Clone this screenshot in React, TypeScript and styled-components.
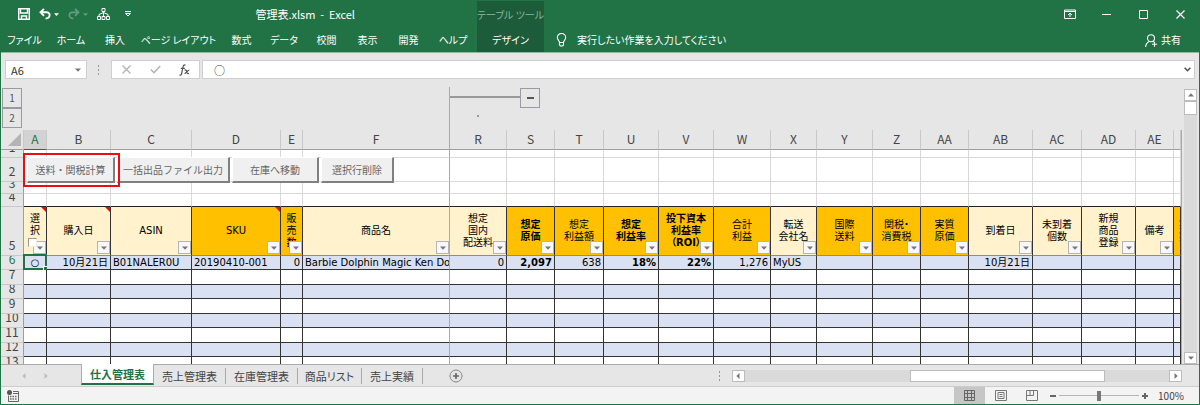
import React from 'react';
import styled, { createGlobalStyle, css } from 'styled-components';

const GREEN = '#217346';
const FONT = '"Noto Sans CJK JP", sans-serif';

const Global = createGlobalStyle`
  *, *::before, *::after { box-sizing: border-box; }
  body { margin: 0; font: 10px/12px ${FONT}; font-feature-settings: 'palt'; color: #444; }
  button, input { font: inherit; color: inherit; margin: 0; padding: 0; border: 0; background: none; border-radius: 0; outline: 0; font-feature-settings: inherit; }
  svg { display: block; flex: none; }
`;

const Window = styled.div`
  display: flex;
  flex-direction: column;
  height: 100vh;
  overflow: hidden;
  background: #e6e6e6;
  border: 1px solid ${GREEN};
  border-top: 0;
`;

/* ---------- title bar and ribbon ---------- */

const Header = styled.header`
  display: flex;
  flex: none;
  background: ${GREEN};
  color: #fff;
  border-bottom: 1px solid #90b9a2;
`;
const HeaderPane = styled.div<{ $grow?: boolean }>`
  flex: ${p => (p.$grow ? '1' : 'none')};
`;
const TitleRow = styled.div<{ $end?: boolean }>`
  display: flex;
  align-items: center;
  height: 28px;
  justify-content: ${p => (p.$end ? 'flex-end' : 'flex-start')};
`;
const QuickTools = styled.div`
  display: flex;
  align-items: center;
  gap: 9px;
  padding-left: 17px;
`;
const ToolButton = styled.button<{ $faded?: boolean }>`
  display: flex;
  align-items: center;
  gap: 3px;
  opacity: ${p => (p.$faded ? 0.3 : 1)};
`;
const DocTitle = styled.h1`
  margin: 0 122px 0 auto;
  font-size: 11px;
  line-height: 16px;
  font-weight: 400;
  white-space: pre;
`;
const TabRow = styled.nav`
  display: flex;
  align-items: center;
  height: 24px;
`;
const RibbonTab = styled.button<{ $width: number }>`
  width: ${p => p.$width}px;
  height: 24px;
  white-space: nowrap;
  text-align: center;
`;
const ContextGroup = styled.div`
  flex: none;
  width: 67px;
  margin-top: 1px;
  background: #1d5c3a;
  text-align: center;
`;
const ContextLabel = styled.div`
  height: 27px;
  line-height: 27px;
  color: #86b59b;
  white-space: nowrap;
`;
const WindowButton = styled.button`
  display: flex;
  align-items: center;
  justify-content: center;
  width: 37px;
  height: 26px;
`;
const TellMe = styled.button`
  display: flex;
  align-items: center;
  gap: 10px;
  padding-left: 12px;
  white-space: nowrap;
`;
const Share = styled.button`
  display: flex;
  align-items: center;
  gap: 3px;
  margin: 0 18px 0 auto;
`;

/* ---------- formula bar ---------- */

const FormulaBar = styled.div`
  display: flex;
  align-items: center;
  flex: none;
  height: 27px;
  padding: 7px 4px 1px;
`;
const Field = styled.div<{ $width?: number }>`
  display: flex;
  align-items: center;
  height: 19px;
  border: 1px solid #cfcfcf;
  background: #fff;
  ${p => (p.$width ? css`flex: none; width: ${p.$width}px;` : css`flex: 1; margin-left: 2px;`)}
`;
const FieldInput = styled.input<{ $indent: number }>`
  flex: 1;
  min-width: 0;
  height: 17px;
  padding-left: ${p => p.$indent}px;
  font-size: 11px;
  line-height: 16px;
  color: #333;
`;
const FieldButton = styled.button<{ $width: number }>`
  display: flex;
  align-items: center;
  justify-content: center;
  width: ${p => p.$width}px;
  height: 17px;
`;
const Grip = styled.div<{ $width: number }>`
  display: flex;
  flex: none;
  justify-content: center;
  width: ${p => p.$width}px;
`;

/* ---------- sheet ---------- */

const Workspace = styled.main`
  display: flex;
  flex: 1;
  min-height: 0;
`;
const SheetPane = styled.div`
  display: flex;
  flex-direction: column;
  flex: 1;
  min-width: 0;
`;
const Outline = styled.div`
  display: flex;
  flex: none;
  height: 50px;
  padding-top: 7px;
`;
const Levels = styled.div`
  display: flex;
  flex-direction: column;
  width: 448px;
  padding: 1px 0 0 1px;
`;
const OutlineButton = styled.button`
  display: flex;
  align-items: center;
  justify-content: center;
  flex: none;
  width: 20px;
  height: 20px;
  border: 1px solid #9a9aa2;
  color: #555;
`;
const GroupColumn = styled.div`
  display: flex;
  align-items: flex-start;
  padding-top: 1px;
  border-left: 1px solid #ababab;
`;
const GroupLine = styled.div`
  width: 70px;
  height: 10px;
  border-bottom: 2px solid #999;
`;
const GroupDot = styled.span`
  display: block;
  width: 2px;
  height: 2px;
  margin: 17px 0 0 27px;
  background: #999;
`;
const GridArea = styled.div`
  position: relative;
  flex: 1;
  min-height: 0;
  overflow: hidden;
  border-right: 1px solid #ababab;
`;
const Grid = styled.table`
  width: 100%;
  table-layout: fixed;
  border-collapse: separate;
  border-spacing: 0;
  background: #fff;
  color: #000;
  th, td { padding: 0; font-weight: 400; vertical-align: top; }
`;
const ColumnHead = styled.th<{ $active?: boolean; $pane?: boolean }>`
  height: 20px;
  font-size: 12px;
  line-height: 18px;
  color: ${p => (p.$active ? GREEN : '#444')};
  background: ${p => (p.$active ? '#d2d2d2' : '#e6e6e6')};
  border-right: 1px solid ${p => (p.$pane ? '#ababab' : '#c8c8c8')};
  border-bottom: 1px solid ${p => (p.$active ? GREEN : '#9e9e9e')};
  overflow: hidden;
`;
const Corner = styled.th`
  background: #e6e6e6;
  border-right: 1px solid #c8c8c8;
  border-bottom: 1px solid #9e9e9e;
  svg { margin: 3px 2px 0 auto; }
`;
const RowHead = styled.th<{ $active?: boolean }>`
  background: #e6e6e6;
  border-right: 1px solid #9e9e9e;
  border-bottom: 1px solid #c8c8c8;
  color: ${p => (p.$active ? GREEN : '#444')};
  font-size: 12px;
  line-height: 20px;
`;
const Clip = styled.div<{ $h: number; $align?: string; $valign?: string }>`
  display: flex;
  height: ${p => p.$h}px;
  overflow: hidden;
  align-items: ${p => p.$valign || 'center'};
  justify-content: ${p => p.$align || 'center'};
`;
const Cell = styled.td<{ $line: string; $bottom: string; $fill?: string; $bold?: boolean }>`
  position: relative;
  border-right: 1px solid ${p => p.$line};
  border-bottom: 1px solid ${p => p.$bottom};
  background: ${p => p.$fill || '#fff'};
  font-family: "DejaVu Sans", ${FONT};
  white-space: pre;
  && { font-weight: ${p => (p.$bold ? 700 : 400)}; }
  ${Clip} { padding: 0 2px; }
`;
const FieldHead = styled.th<{ $line: string; $gold?: boolean; $bold?: boolean; $cut?: boolean }>`
  position: relative;
  border-right: 1px solid ${p => p.$line};
  border-bottom: 1px solid #8d8d80;
  background: ${p => (p.$gold ? '#ffc000' : '#fff2cc')};
  font-family: "DejaVu Sans", ${FONT};
  white-space: pre;
  text-align: center;
  && { font-weight: ${p => (p.$bold ? 700 : 400)}; }
  ${Clip} { padding-left: ${p => (p.$cut ? 5 : 0)}px; }
`;
const FilterButton = styled.button`
  position: absolute;
  right: 0;
  bottom: 1px;
  display: flex;
  align-items: center;
  justify-content: center;
  width: 13px;
  height: 13px;
  border: 1px solid #b4b4b4;
  background: #f8f8fa;
`;
const NoteMark = styled.span`
  position: absolute;
  top: 0;
  right: 0;
  border-top: 5px solid #f00;
  border-left: 5px solid transparent;
`;
const SelectAll = styled.input`
  position: absolute;
  left: 4px;
  bottom: 8px;
  width: 9px;
  height: 9px;
  appearance: none;
  background: #fff;
  border: 1px solid #999;
  border-right-color: #eee;
  border-bottom-color: #eee;
`;
const Cursor = styled.span`
  position: absolute;
  inset: -2px -1px -1px -1px;
  border: 2px solid ${GREEN};
  &::after {
    content: '';
    position: absolute;
    right: -3px;
    bottom: -3px;
    width: 5px;
    height: 5px;
    background: ${GREEN};
    border: 1px solid #fff;
    border-width: 1px 0 0 1px;
  }
`;
const MacroButtons = styled.div`
  position: absolute;
  top: 27px;
  left: 26px;
  display: flex;
  gap: 2px;
`;
const MacroButton = styled.button<{ $width: number }>`
  width: ${p => p.$width}px;
  height: 26px;
  background: #f0f0f0;
  border: 1px solid #fff;
  border-right: 2px solid #808080;
  border-bottom: 2px solid #808080;
  color: #666;
  white-space: nowrap;
  font-feature-settings: normal;
`;
const Highlight = styled.div`
  position: absolute;
  top: 23px;
  left: 22px;
  width: 97px;
  height: 34px;
  border: 2px solid #f00c0c;
  pointer-events: none;
`;

/* ---------- scroll bars ---------- */

const ScrollColumn = styled.div`
  display: flex;
  flex-direction: column;
  flex: none;
  width: 17px;
  padding: 9px 2px 0;
`;
const Track = styled.div<{ $row?: boolean }>`
  display: flex;
  flex: 1;
  flex-direction: ${p => (p.$row ? 'row' : 'column')};
  background: #dadada;
`;
const ScrollButton = styled.button`
  display: flex;
  align-items: center;
  justify-content: center;
  flex: none;
  width: 13px;
  height: 12px;
  border: 1px solid #bcbcbc;
  background: #fff;
`;
const VThumb = styled.div`
  height: 14px;
  border: 1px solid #bcbcbc;
  background: #fff;
`;
const HThumb = styled.div`
  width: 46%;
  margin-left: 39%;
  border: 1px solid #bcbcbc;
  background: #fff;
`;

/* ---------- sheet tabs and status bar ---------- */

const SheetBar = styled.div`
  display: flex;
  align-items: center;
  flex: none;
  height: 22px;
  border-top: 1px solid #ababab;
`;
const SheetNav = styled.div`
  display: flex;
  gap: 16px;
  width: 80px;
  padding-left: 20px;
`;
const SheetTab = styled.button<{ $active?: boolean; $width: number }>`
  flex: none;
  width: ${p => p.$width}px;
  font-size: 11px;
  white-space: nowrap;
  ${p => p.$active
    ? css`
        height: 21px;
        margin-top: -2px;
        background: #fff;
        color: ${GREEN};
        font-weight: 700;
        border: 1px solid #ababab;
        border-top: 0;
        border-bottom: 2px solid ${GREEN};
      `
    : css`
        height: 16px;
        border-right: 1px solid #ababab;
      `}
`;
const AddSheet = styled.button`
  margin-left: 26px;
`;
const HScroll = styled.div`
  display: flex;
  align-items: center;
  flex: none;
  width: 41%;
  margin-left: auto;
  padding-right: 17px;
  ${Track} { height: 12px; }
`;
const StatusBar = styled.footer`
  display: flex;
  align-items: center;
  flex: none;
  height: 18px;
  padding: 0 15px 0 6px;
  background: #f3f3f3;
  border-top: 1px solid #cdcdcd;
`;
const Views = styled.div`
  display: flex;
  margin-left: auto;
`;
const ViewButton = styled.button<{ $active?: boolean }>`
  display: flex;
  align-items: center;
  justify-content: center;
  width: 31px;
  height: 17px;
  background: ${p => (p.$active ? '#c6c6c6' : 'transparent')};
`;
const ZoomStep = styled.button`
  display: flex;
  align-items: center;
  justify-content: center;
  width: 12px;
  height: 17px;
`;
const ZoomSlider = styled.input`
  appearance: none;
  width: 80px;
  height: 11px;
  background: linear-gradient(#b5b5b5, #b5b5b5) center / 100% 1px no-repeat;
  &::-webkit-slider-thumb {
    appearance: none;
    width: 4px;
    height: 10px;
    background: #777;
  }
`;
const ZoomValue = styled.button`
  margin-left: 7px;
  width: 26px;
`;

const Caret = ({ w = 6, color = '#777', dir = 'down' }: { w?: number; color?: string; dir?: string }) => {
  const turn = { down: 0, up: 180, left: 90, right: 270 }[dir];
  return (
    <svg width={w} height={w} viewBox="0 0 6 6" aria-hidden>
      <path d="M0 1.5H6L3 4.7Z" fill={color} transform={`rotate(${turn} 3 3)`} />
    </svg>
  );
};

const Dots = () => (
  <svg width="2" height="10" aria-hidden>
    <path d="M0 0h1v2h-1zM0 4h1v2h-1zM0 8h1v2h-1z" fill="#999" />
  </svg>
);

const ribbonTabs: [string, number][] = [
  ['ファイル', 47], ['ホーム', 46], ['挿入', 42], ['ページ レイアウト', 85], ['数式', 41],
  ['データ', 44], ['校閲', 41], ['表示', 41], ['開発', 41], ['ヘルプ', 48],
];

type Column = {
  id: string; w?: number; title: string; gold?: boolean; bold?: boolean; note?: boolean;
  value?: string; align?: string;
};
const END = 'flex-end';
const START = 'flex-start';
const columns: Column[] = [
  { id: 'A', w: 23, title: '選\n択\n ', note: true, value: '○', align: 'center' },
  { id: 'B', w: 64, title: '購入日', note: true, value: '10月21日', align: END },
  { id: 'C', w: 81, title: 'ASIN', value: 'B01NALER0U', align: START },
  { id: 'D', w: 89, title: 'SKU', gold: true, note: true, value: '20190410-001', align: START },
  { id: 'E', w: 22, title: '販\n売\n数', gold: true, value: '0', align: END },
  { id: 'F', w: 147, title: '商品名', value: 'Barbie Dolphin Magic Ken Do', align: START },
  { id: 'R', w: 57, title: '想定\n国内\n配送料', value: '0', align: END },
  { id: 'S', w: 48, title: '想定\n原価', gold: true, bold: true, value: '2,097', align: END },
  { id: 'T', w: 49, title: '想定\n利益額', gold: true, value: '638', align: END },
  { id: 'U', w: 55, title: '想定\n利益率', gold: true, bold: true, value: '18%', align: END },
  { id: 'V', w: 55, title: '投下資本\n利益率\n（ROI）', gold: true, bold: true, value: '22%', align: END },
  { id: 'W', w: 57, title: '合計\n利益', gold: true, value: '1,276', align: END },
  { id: 'X', w: 46, title: '転送\n会社名', value: 'MyUS', align: START },
  { id: 'Y', w: 56, title: '国際\n送料', gold: true },
  { id: 'Z', w: 48, title: '関税・\n消費税', gold: true },
  { id: 'AA', w: 48, title: '実質\n原価', gold: true },
  { id: 'AB', w: 64, title: '到着日', value: '10月21日', align: END },
  { id: 'AC', w: 49, title: '未到着\n個数' },
  { id: 'AD', w: 54, title: '新規\n商品\n登録' },
  { id: 'AE', w: 38, title: '備考' },
  { id: '', title: '実\n実', gold: true },
];

const topRows = [8, 24, 12, 13];
const dataRows = [14, 15, 14, 15, 14, 15, 14, 15];
const lineOf = (c: Column) => (c.id === 'F' ? '#ababab' : '#333');

const sheets: [string, number][] = [['売上管理表', 72], ['在庫管理表', 72], ['商品リスト', 64], ['売上実績', 61]];

export default function App() {
  return (
    <Window>
      <Global />
      <Header>
        <HeaderPane>
          <TitleRow>
            <QuickTools>
              <ToolButton aria-label="上書き保存">
                <svg width="12" height="12" viewBox="0 0 12 12" fill="none" stroke="#fff" strokeWidth="1.4">
                  <path d="M.7.7H11.3V11.3H.7ZM2.500.7V5H9.500V.7M3.500 11.300V8H8.500V11.300" />
                </svg>
              </ToolButton>
              <ToolButton aria-label="元に戻す">
                <svg width="12" height="12" viewBox="0 0 12 12" fill="none" stroke="#fff" strokeWidth="1.900">
                  <path d="M5 .8 1.500 4.300 5 7.800M1.800 4.300H7.400C11.800 4.300 11.800 10 6.600 10.500" />
                </svg>
                <Caret color="#fff" w={5} />
              </ToolButton>
              <ToolButton aria-label="やり直し" $faded>
                <svg width="12" height="12" viewBox="0 0 12 12" fill="none" stroke="#fff" strokeWidth="1.700">
                  <path d="M7 .8 10.500 4.300 7 7.800M10.200 4.300H4.600C.2 4.300.2 10 5.400 10.500" />
                </svg>
                <Caret color="#fff" w={5} />
              </ToolButton>
              <ToolButton aria-label="組織図">
                <svg width="13" height="12" viewBox="0 0 13 12" fill="none" stroke="#fff">
                  <path d="M5 .5H8V3.5H5ZM.5 8.5H3.5V11.5H.5ZM5 8.5H8V11.5H5ZM9.5 8.5H12.500V11.5H9.500ZM6.500 3.500V8.500M2 8.500V6.500L6.500 4.500 11 6.500V8.500" />
                </svg>
              </ToolButton>
              <ToolButton aria-label="クイック アクセスのカスタマイズ">
                <svg width="18" height="7" viewBox="0 0 18 7" fill="none" stroke="#fff">
                  <path d="M6 .5H12M6.500 2.500H11.500L9 5Z" />
                </svg>
              </ToolButton>
            </QuickTools>
            <DocTitle>管理表.xlsm  -  Excel</DocTitle>
          </TitleRow>
          <TabRow>
            {ribbonTabs.map(([name, w]) => <RibbonTab key={name} $width={w}>{name}</RibbonTab>)}
          </TabRow>
        </HeaderPane>
        <ContextGroup>
          <ContextLabel>テーブル ツール</ContextLabel>
          <RibbonTab $width={67}>デザイン</RibbonTab>
        </ContextGroup>
        <HeaderPane $grow>
          <TitleRow $end>
            <WindowButton aria-label="リボンの表示オプション">
              <svg width="12" height="10" viewBox="0 0 12 10" fill="none" stroke="#fff">
                <path d="M.5 1H11.500V9.500H.500ZM.500 2.500H11.500M6 8V4.500M4 6 6 4.200 8 6" />
              </svg>
            </WindowButton>
            <WindowButton aria-label="最小化">
              <svg width="9" height="9" stroke="#fff"><path d="M0 4.500H9" /></svg>
            </WindowButton>
            <WindowButton aria-label="最大化">
              <svg width="9" height="9" stroke="#fff" fill="none"><path d="M.5.500H8.500V8.500H.500Z" /></svg>
            </WindowButton>
            <WindowButton aria-label="閉じる">
              <svg width="9" height="9" stroke="#fff" strokeWidth="1.200"><path d="M.5.500 8.500 8.500M8.500.500.500 8.500" /></svg>
            </WindowButton>
          </TitleRow>
          <TabRow>
            <TellMe>
              <svg width="11" height="14" viewBox="0 0 11 14" fill="none" stroke="#fff" strokeWidth="1.100">
                <path d="M3.500 9.500C3.500 7.500 1.300 7 1.300 4.600A4.200 4.200 0 0 1 9.700 4.600C9.700 7 7.500 7.500 7.500 9.500ZM3.500 9.500V12L4.500 13H6.500L7.500 12V9.500" />
              </svg>
              実行したい作業を入力してください
            </TellMe>
            <Share>
              <svg width="13" height="13" viewBox="0 0 13 13" fill="none" stroke="#fff" strokeWidth="1.100">
                <circle cx="6" cy="4.200" r="3.500" />
                <path d="M.6 13C.800 10 2.200 8.300 4.200 7.400M7.800 7.300 8.800 8M9.500 7.800V12.800M7 10.300H12" />
              </svg>
              共有
            </Share>
          </TabRow>
        </HeaderPane>
      </Header>

      <FormulaBar>
        <Field $width={82}>
          <FieldInput $indent={5} aria-label="名前ボックス" defaultValue="A6" />
          <FieldButton $width={17} aria-label="名前の一覧"><Caret /></FieldButton>
        </Field>
        <Grip $width={24}><Dots /></Grip>
        <Field $width={89}>
          <FieldButton $width={29} aria-label="キャンセル">
            <svg width="9" height="9" stroke="#b4b4b4" strokeWidth="1.400"><path d="M.5.500 8.500 8.500M8.500.500.500 8.500" /></svg>
          </FieldButton>
          <FieldButton $width={29} aria-label="入力">
            <svg width="11" height="9" fill="none" stroke="#b4b4b4" strokeWidth="1.600"><path d="M.8 4.500 4 7.700 10.200 1" /></svg>
          </FieldButton>
          <FieldButton $width={29} aria-label="関数の挿入">
            <svg width="11" height="12" viewBox="0 0 11 12" fill="none" stroke="#555" strokeWidth="1.200">
              <path d="M6.500 1.200C5 .300 4.300 1.500 4 3L2.600 9.500C2.300 11 1.500 11.500.500 11M1.800 4.300H5.800M5.500 6C7 5.500 7.500 6.500 7.800 8S9 10 10 9.300M10.300 6C8.800 6 7 9.500 5.500 9.500" />
            </svg>
          </FieldButton>
        </Field>
        <Field>
          <FieldInput $indent={11} aria-label="数式バー" defaultValue="○" />
          <FieldButton $width={13} aria-label="数式バーの展開">
            <svg width="7" height="5" fill="none" stroke="#555" strokeWidth="1.600"><path d="M.6.800 3.500 3.700 6.400.800" /></svg>
          </FieldButton>
        </Field>
      </FormulaBar>

      <Workspace>
        <SheetPane>
          <Outline>
            <Levels>
              <OutlineButton>1</OutlineButton>
              <OutlineButton>2</OutlineButton>
            </Levels>
            <GroupColumn>
              <div>
                <GroupLine />
                <GroupDot />
              </div>
              <OutlineButton aria-label="グループを閉じる">
                <svg width="7" height="2"><path d="M0 0H7V2H0Z" fill="#555" /></svg>
              </OutlineButton>
            </GroupColumn>
          </Outline>
          <GridArea>
            <Grid>
              <colgroup>
                <col width={23} />
                {columns.map(c => <col key={c.id} width={c.w} />)}
              </colgroup>
              <thead>
                <tr>
                  <Corner aria-label="すべて選択">
                    <svg width="13" height="13"><path d="M13 0V13H0Z" fill="#b4b4b4" /></svg>
                  </Corner>
                  {columns.map(c => (
                    <ColumnHead key={c.id} scope="col" $active={c.id === 'A'} $pane={c.id === 'F'}>{c.id}</ColumnHead>
                  ))}
                </tr>
              </thead>
              <tbody>
                {topRows.map((h, r) => (
                  <tr key={r}>
                    <RowHead scope="row"><Clip $h={h - 1} $valign="flex-end">{r + 1}</Clip></RowHead>
                    {columns.map(c => (
                      <Cell key={c.id} $line={c.id === 'F' ? '#ababab' : '#d9d9d9'} $bottom={r === 3 ? '#222' : '#d9d9d9'} />
                    ))}
                  </tr>
                ))}
                <tr>
                  <RowHead scope="row"><Clip $h={48} $valign="flex-end">5</Clip></RowHead>
                  {columns.map(c => (
                    <FieldHead key={c.id} scope="col" $line={lineOf(c)} $gold={c.gold} $bold={c.bold} $cut={!c.id}>
                      <Clip $h={48} $align={c.id ? 'center' : START}>{c.title}</Clip>
                      {c.note && <NoteMark />}
                      {c.id && <FilterButton aria-label="フィルター"><Caret /></FilterButton>}
                      {c.id === 'A' && <SelectAll type="checkbox" aria-label="すべて選択" />}
                    </FieldHead>
                  ))}
                </tr>
                {dataRows.map((h, r) => (
                  <tr key={r}>
                    <RowHead scope="row" $active={r === 0}><Clip $h={h - 1} $valign="flex-end">{r + 6}</Clip></RowHead>
                    {columns.map(c => (
                      <Cell key={c.id} $line={lineOf(c)} $bottom="#333" $bold={c.bold} $fill={r % 2 ? '#fff' : '#d9e1f2'}>
                        {r === 0 && <Clip $h={h - 1} $align={c.align}>{c.value}</Clip>}
                        {r === 0 && c.id === 'A' && <Cursor />}
                      </Cell>
                    ))}
                  </tr>
                ))}
              </tbody>
            </Grid>
            <MacroButtons>
              <MacroButton $width={88}>送料・関税計算</MacroButton>
              <MacroButton $width={113}>一括出品ファイル出力</MacroButton>
              <MacroButton $width={87}>在庫へ移動</MacroButton>
              <MacroButton $width={73}>選択行削除</MacroButton>
            </MacroButtons>
            <Highlight />
          </GridArea>
        </SheetPane>
        <ScrollColumn>
          <ScrollButton aria-label="上へ"><Caret dir="up" /></ScrollButton>
          <Track><VThumb /></Track>
          <ScrollButton aria-label="下へ"><Caret /></ScrollButton>
        </ScrollColumn>
      </Workspace>

      <SheetBar>
        <SheetNav>
          <Caret dir="left" color="#bbb" />
          <Caret dir="right" color="#bbb" />
        </SheetNav>
        <SheetTab $active $width={73}>仕入管理表</SheetTab>
        {sheets.map(([name, w]) => <SheetTab key={name} $width={w}>{name}</SheetTab>)}
        <AddSheet aria-label="新しいシート">
          <svg width="14" height="14" viewBox="0 0 14 14" fill="none" stroke="#888">
            <circle cx="7" cy="7" r="6" />
            <path d="M7 4V10M4 7H10" stroke="#666" strokeWidth="1.600" />
          </svg>
        </AddSheet>
        <HScroll>
          <Grip $width={24}><Dots /></Grip>
          <ScrollButton aria-label="左へ"><Caret dir="left" /></ScrollButton>
          <Track $row><HThumb /></Track>
          <ScrollButton aria-label="右へ"><Caret dir="right" /></ScrollButton>
        </HScroll>
      </SheetBar>

      <StatusBar>
        <svg width="12" height="12" viewBox="0 0 12 12" fill="none" stroke="#666">
          <path d="M6 1.500H11.500V11.500H1.500V5.500M6 3.500H11.500" />
          <path d="M3 6.500H10M3 9H10" strokeWidth="1.500" strokeDasharray="1.500 1" />
          <circle cx="2.500" cy="2.500" r="2.500" fill="#555" stroke="none" />
        </svg>
        <Views>
          <ViewButton $active aria-label="標準">
            <svg width="11" height="11" fill="none" stroke="#666"><path d="M.5.500H10.500V10.500H.500ZM3.500.500V10.500M7.500.500V10.500M.500 3.500H10.500M.500 7.500H10.500" /></svg>
          </ViewButton>
          <ViewButton aria-label="ページ レイアウト">
            <svg width="12" height="11" fill="none" stroke="#777"><path d="M.5.500H11.500V10.500H.500ZM3 2.500H9V8.500H3ZM4.500 4.500H7.500M4.500 6.500H7.500" /></svg>
          </ViewButton>
          <ViewButton aria-label="改ページ プレビュー">
            <svg width="12" height="11" fill="none" stroke="#777"><path d="M.5.500H11.500V10.500H.500ZM.500 5.500H7.500V.500M4 .500V5.500" /></svg>
          </ViewButton>
        </Views>
        <ZoomStep aria-label="縮小"><svg width="6" height="6"><path d="M0 2H6V4H0Z" fill="#666" /></svg></ZoomStep>
        <ZoomSlider type="range" min="10" max="190" defaultValue="100" aria-label="ズーム" />
        <ZoomStep aria-label="拡大"><svg width="6" height="6"><path d="M0 2H2V0H4V2H6V4H4V6H2V4H0Z" fill="#666" /></svg></ZoomStep>
        <ZoomValue>100%</ZoomValue>
      </StatusBar>
    </Window>
  );
}
